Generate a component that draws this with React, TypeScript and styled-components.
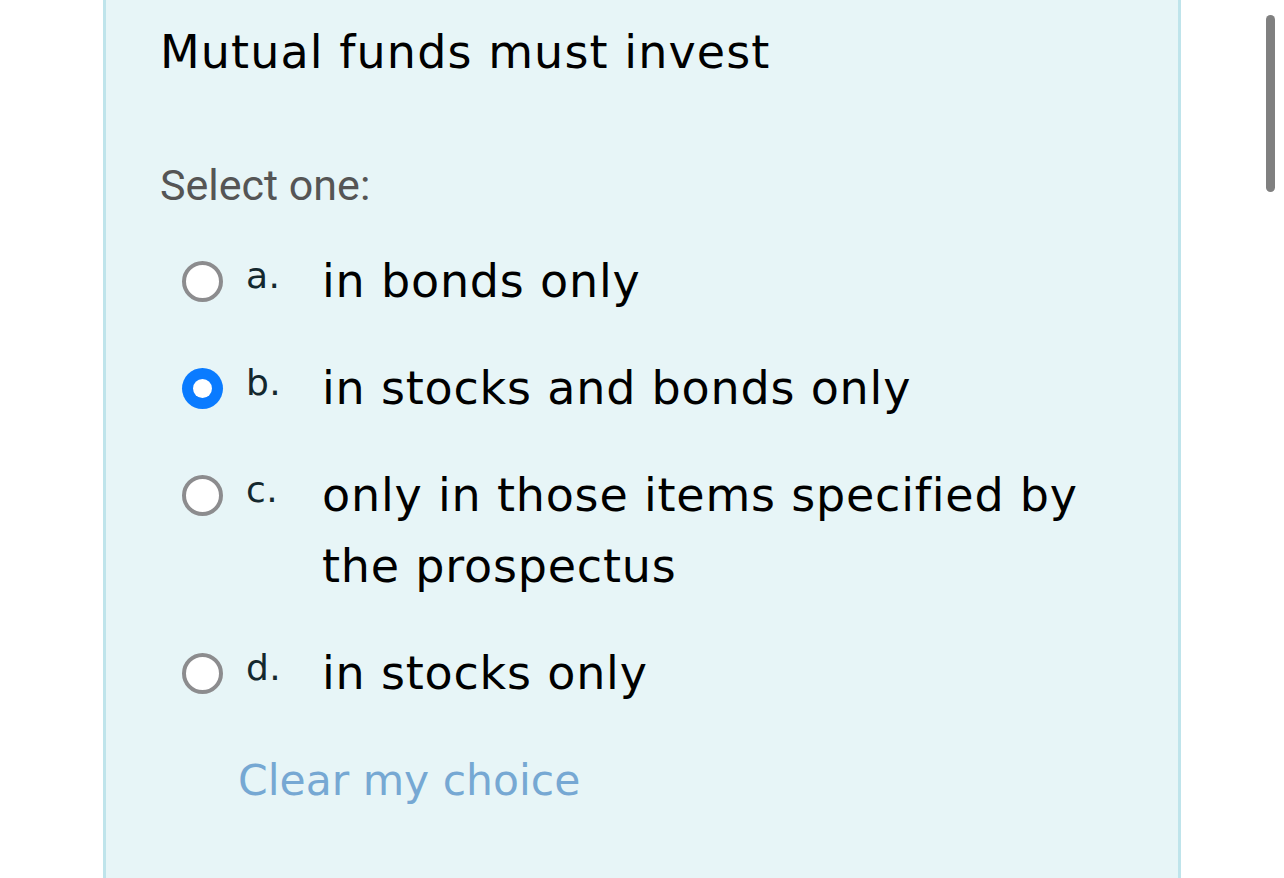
import React from "react";
import styled, { createGlobalStyle } from "styled-components";

const Global = createGlobalStyle`
  html, body {
    margin: 0;
    padding: 0;
    background: #ffffff;
    overflow: hidden;
  }
  * { box-sizing: border-box; }
`;

const Page = styled.div`
  min-height: 100vh;
  padding-left: 103px;
  background: #ffffff;
`;

const Panel = styled.section`
  width: 1078px;
  min-height: 878px;
  background: #e7f5f7;
  border-left: 3px solid #bfe4eb;
  border-right: 3px solid #bfe4eb;
  padding: 24px 58px 0 54px;
  font-family: "DejaVu Sans", "Noto Sans", sans-serif;
  color: #000;
`;

const Title = styled.h1`
  margin: 0;
  font-size: 46px;
  line-height: 56px;
  font-weight: 400;
  letter-spacing: 1.1px;
`;

const Prompt = styled.div`
  margin-top: 80px;
  font-family: Roboto, "Liberation Sans", sans-serif;
  font-size: 43px;
  line-height: 50px;
  color: #555555;
`;

const Options = styled.div`
  margin-top: 36px;
  display: flex;
  flex-direction: column;
  gap: 36px;
`;

const Row = styled.label`
  display: flex;
  align-items: flex-start;
  padding-left: 22px;
`;

const RadioCell = styled.span`
  flex: 0 0 41px;
  height: 71px;
  display: flex;
  align-items: center;
  justify-content: center;
`;

const Radio = styled.span<{ $checked?: boolean }>`
  width: 41px;
  height: 41px;
  border-radius: 50%;
  display: flex;
  align-items: center;
  justify-content: center;
  background: ${(p) => (p.$checked ? "#0a7bff" : "#ffffff")};
  border: ${(p) => (p.$checked ? "none" : "4px solid #8c8c8e")};
  &::after {
    content: "";
    display: ${(p) => (p.$checked ? "block" : "none")};
    width: 19px;
    height: 19px;
    border-radius: 50%;
    background: #ffffff;
  }
`;

const Letter = styled.span`
  flex: 0 0 99px;
  padding-left: 23px;
  font-size: 36px;
  line-height: 59px;
  color: #14282e;
  letter-spacing: 0.5px;
`;

const Answer = styled.span`
  flex: 1;
  font-size: 46px;
  line-height: 71px;
  letter-spacing: 0.8px;
  color: #000;
`;

const Clear = styled.a`
  display: block;
  margin: 36px 0 0 78px;
  font-size: 42.5px;
  line-height: 71px;
  letter-spacing: 0;
  color: #76a8d3;
  text-decoration: none;
  cursor: pointer;
`;

const Scrollbar = styled.div`
  position: fixed;
  left: 1266px;
  top: 15px;
  width: 9px;
  height: 177px;
  border-radius: 5px;
  background: #808080;
`;

const options = [
  { key: "a", text: "in bonds only" },
  { key: "b", text: "in stocks and bonds only", checked: true },
  { key: "c", text: "only in those items specified by the prospectus" },
  { key: "d", text: "in stocks only" },
];

export default function App() {
  return (
    <>
      <Global />
      <Page>
        <Panel>
          <Title>Mutual funds must invest</Title>
          <Prompt>Select one:</Prompt>
          <Options>
            {options.map((o) => (
              <Row key={o.key}>
                <RadioCell>
                  <Radio $checked={o.checked} />
                </RadioCell>
                <Letter>{o.key}.</Letter>
                <Answer>{o.text}</Answer>
              </Row>
            ))}
          </Options>
          <Clear>Clear my choice</Clear>
        </Panel>
      </Page>
      <Scrollbar />
    </>
  );
}
